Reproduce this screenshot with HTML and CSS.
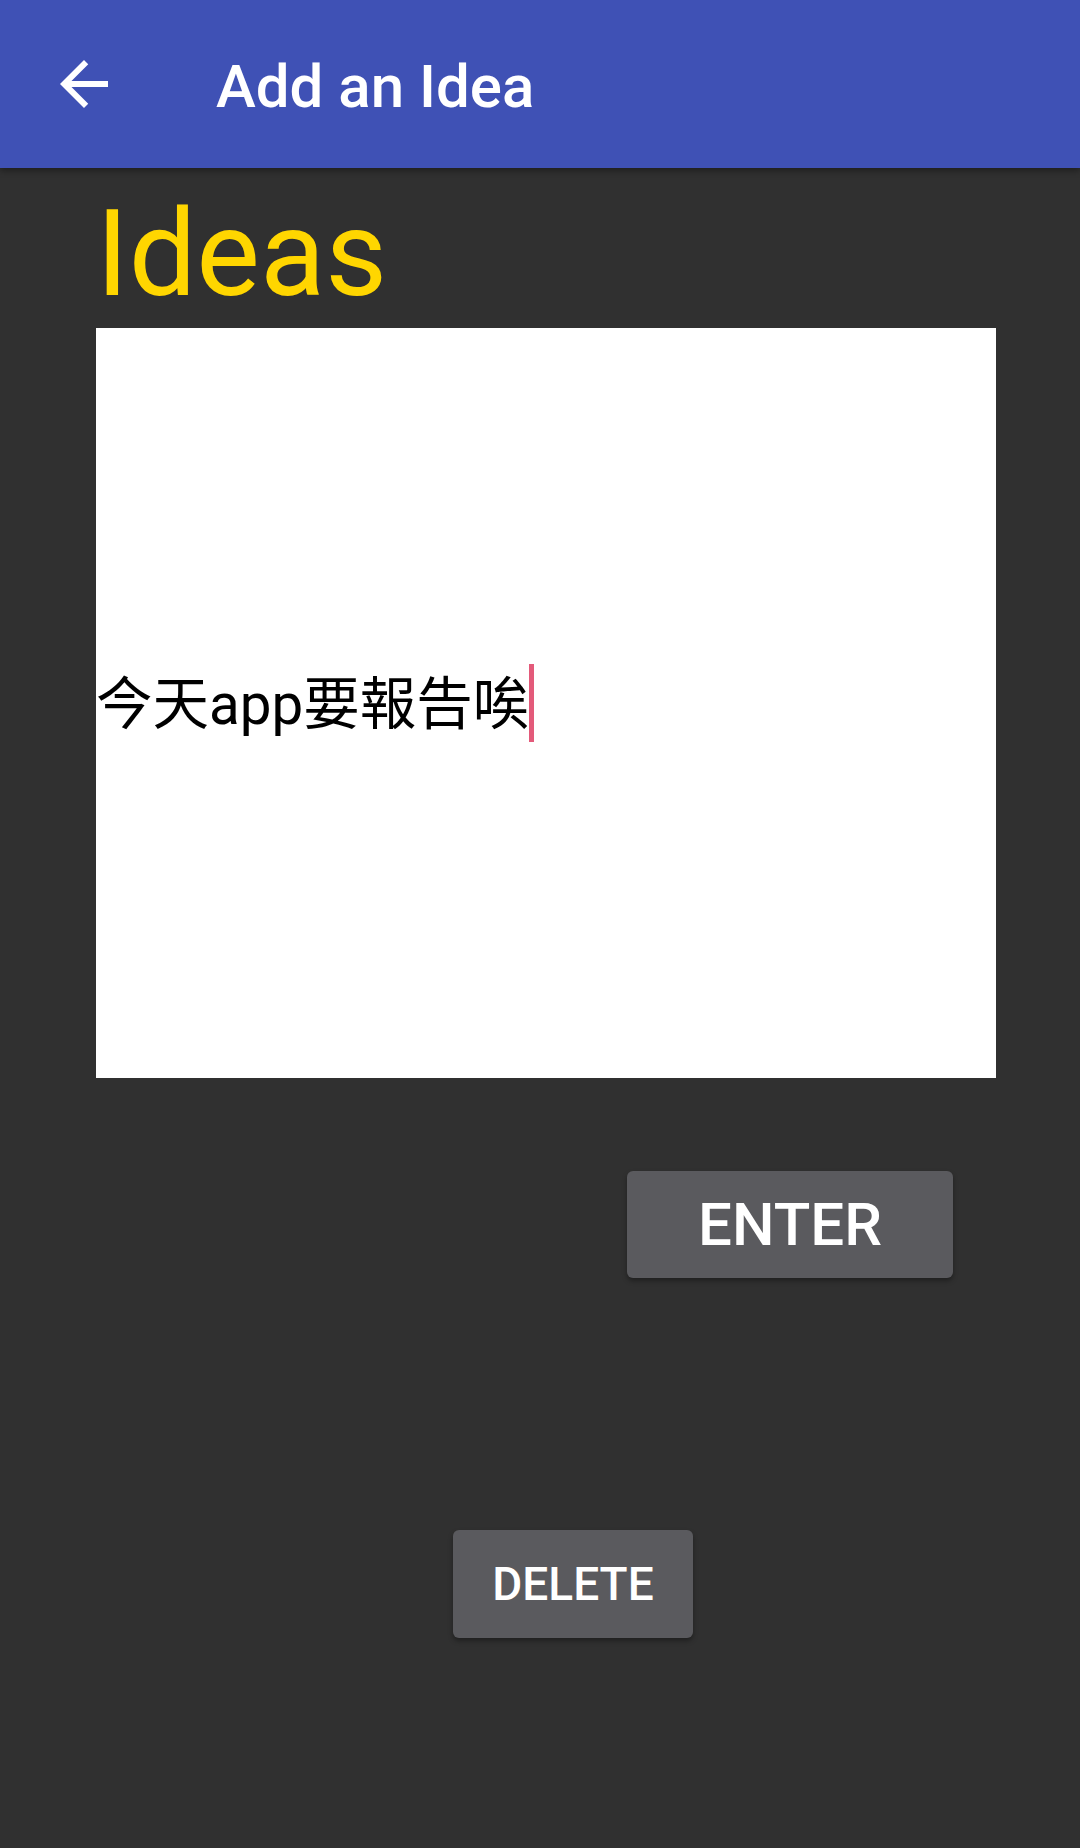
FILE: index.html
```html
<!DOCTYPE html>
<html lang="zh-Hant">
<head>
<meta charset="utf-8">
<title>Add an Idea</title>
<link rel="stylesheet" href="styles.css">
</head>
<body>
<header class="appbar">
  <div class="nav-icon">
    <svg width="72" height="72" viewBox="0 0 24 24"><path fill="#ffffff" d="M20 11H7.83l5.59-5.59L12 4l-8 8 8 8 1.41-1.41L7.83 13H20v-2z"/></svg>
  </div>
  <h1 class="title">Add an Idea</h1>
</header>
<main class="content">
  <div class="heading">Ideas</div>
  <div class="editor">
    <span class="editor-text">今天app要報告唉</span><span class="cursor"></span>
  </div>
  <div class="row-enter">
    <button class="btn btn-enter">ENTER</button>
  </div>
  <div class="row-delete">
    <button class="btn btn-delete">DELETE</button>
  </div>
</main>
</body>
</html>
```

FILE: styles.css
```css
html, body {
  margin: 0;
  padding: 0;
}
body {
  width: 1080px;
  height: 1848px;
  background: #303030;
  font-family: Roboto, "Noto Sans CJK TC", sans-serif;
  overflow: hidden;
}
.appbar {
  height: 168px;
  background: #3f51b5;
  display: flex;
  align-items: center;
  box-shadow: 0 3px 6px rgba(0,0,0,0.35);
  position: relative;
  z-index: 1;
}
.nav-icon {
  width: 72px;
  height: 72px;
  margin-left: 48px;
  display: flex;
}
.title {
  margin: 0 0 0 96px;
  padding-top: 6px;
  font-family: Roboto, sans-serif;
  font-weight: 500;
  font-size: 60px;
  color: #ffffff;
  line-height: 1;
}
.content {
  display: flex;
  flex-direction: column;
}
.heading {
  margin: 16px 0 0 96px;
  font-family: Roboto, sans-serif;
  font-size: 120px;
  line-height: 140px;
  color: #ffd600;
}
.editor {
  margin: 4px 0 0 96px;
  width: 900px;
  height: 750px;
  background: #ffffff;
  display: flex;
  align-items: center;
}
.editor-text {
  font-family: Roboto, "Noto Sans CJK TC", sans-serif;
  font-size: 56.5px;
  color: #000000;
  line-height: 1;
  margin-top: 4px;
}
.cursor {
  display: inline-block;
  width: 5px;
  height: 78px;
  margin-left: 0;
  background: #e35a7a;
}
.row-enter {
  display: flex;
  justify-content: flex-end;
  margin-top: 93px;
  padding-right: 127px;
}
.row-delete {
  display: flex;
  margin-top: 252px;
  padding-left: 453px;
}
.btn {
  border: none;
  border-radius: 6px;
  background: #5a5a5e;
  color: #ffffff;
  font-family: Roboto, sans-serif;
  font-weight: 500;
  box-shadow: 0 3px 5px rgba(0,0,0,0.35);
  padding: 0;
}
.btn-enter {
  width: 326px;
  height: 107px;
  font-size: 60px;
}
.btn-delete {
  width: 240px;
  height: 108px;
  font-size: 46px;
}
```
